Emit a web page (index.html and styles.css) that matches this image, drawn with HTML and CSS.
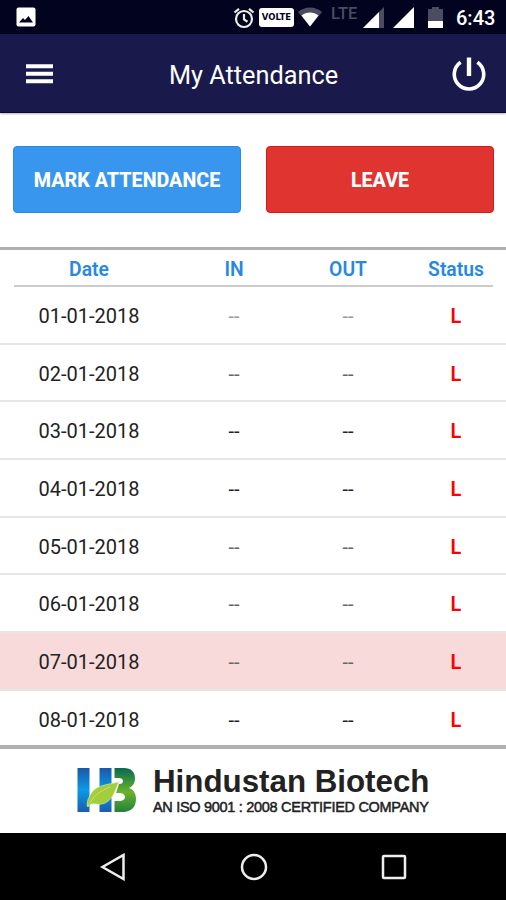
FILE: index.html
```html
<!DOCTYPE html>
<html lang="en">
<head>
    <meta charset="UTF-8">
    <meta name="viewport" content="width=device-width, initial-scale=1.0">
    <title>My Attendance</title>
    <link rel="stylesheet" href="styles.css">
</head>
<body>
    <!-- Status bar -->
    <div class="status-bar">
        <svg class="picture" width="20" height="20" viewBox="0 0 20 20">
            <rect x="0.5" y="0.5" width="19" height="19" rx="2" fill="#fff"/>
            <path d="M3 15.5L7 11l2 2 3.5-4L17 15.5z" fill="#02031f"/>
        </svg>
        <svg class="alarm" width="22" height="22" viewBox="0 0 22 22" fill="none" stroke="#eee" stroke-width="2.2">
            <circle cx="11" cy="12" r="8"/>
            <path d="M11 7v5.5l3.500 2.200M1.500 5.500L6 1.800M20.500 5.500L16 1.800"/>
        </svg>
        <span class="volte">VOLTE</span>
        <svg class="wifi" width="26" height="20" viewBox="0 0 26 20">
            <path d="M1 5C8-1 18-1 25 5L13 19.5z" fill="#4b4b62"/>
            <path d="M4.500 8.500C9 4.500 17 4.500 21.500 8.500L13 19.500z" fill="#fff"/>
        </svg>
        <span class="lte">LTE</span>
        <svg class="signal" width="21" height="21" viewBox="0 0 21 21">
            <path d="M0 21L21 0v21z" fill="#4b4b62"/>
            <path d="M0 21L16 5v16z" fill="#fff"/>
        </svg>
        <svg class="signal-full" width="21" height="21" viewBox="0 0 21 21">
            <path d="M0 21L21 0v21z" fill="#fff"/>
        </svg>
        <svg class="battery" width="15" height="22" viewBox="0 0 15 22">
            <path d="M4 0h7v2h4v12H0V2h4z" fill="#4b4b62"/>
            <path d="M0 14h15v7H0z" fill="#fff"/>
        </svg>
        <span class="time">6:43</span>
    </div>

    <!-- Header -->
    <div class="header">
        <svg class="menu" width="28" height="20" viewBox="0 0 28 20">
            <path d="M0 2.200h27M0 9.800h27M0 17.300h27" stroke="#fff" stroke-width="4"/>
        </svg>
        <h1>My Attendance</h1>
        <svg class="power" width="34" height="34" viewBox="0 0 34 34" fill="none" stroke="#fff">
            <path d="M8.600 5.200A14.700 14.700 0 1 0 25.400 5.200" stroke-width="3.600"/>
            <path d="M17 0.500v18.500" stroke-width="4.400"/>
        </svg>
    </div>

    <!-- Buttons -->
    <div class="actions">
        <button class="btn mark">MARK ATTENDANCE</button>
        <button class="btn leave">LEAVE</button>
    </div>

    <!-- Attendance list -->
    <div class="list">
        <div class="row head"><span>Date</span><span>IN</span><span>OUT</span><span>Status</span></div>
        <div class="row"><span>01-01-2018</span><span class="faint">--</span><span class="faint">--</span><span class="status">L</span></div>
        <div class="row"><span>02-01-2018</span><span class="soft">--</span><span class="soft">--</span><span class="status">L</span></div>
        <div class="row"><span>03-01-2018</span><span>--</span><span>--</span><span class="status">L</span></div>
        <div class="row"><span>04-01-2018</span><span>--</span><span>--</span><span class="status">L</span></div>
        <div class="row"><span>05-01-2018</span><span class="soft">--</span><span class="soft">--</span><span class="status">L</span></div>
        <div class="row"><span>06-01-2018</span><span class="soft">--</span><span class="soft">--</span><span class="status">L</span></div>
        <div class="row sunday"><span>07-01-2018</span><span class="soft">--</span><span class="soft">--</span><span class="status">L</span></div>
        <div class="row"><span>08-01-2018</span><span>--</span><span>--</span><span class="status">L</span></div>
    </div>

    <!-- Company footer -->
    <div class="company">
        <svg class="logo" width="60" height="46" viewBox="0 0 60 46">
            <defs>
                <linearGradient id="blue" x1="0" y1="0" x2="0" y2="1">
                    <stop offset="0" stop-color="#1c57a5"/>
                    <stop offset="0.5" stop-color="#0b9be6"/>
                    <stop offset="1" stop-color="#1a5cad"/>
                </linearGradient>
                <linearGradient id="green" x1="0" y1="0" x2="0" y2="1">
                    <stop offset="0" stop-color="#08694f"/>
                    <stop offset="0.55" stop-color="#69b32d"/>
                    <stop offset="1" stop-color="#23803c"/>
                </linearGradient>
            </defs>
            <path d="M0.500 1h12v44H0.500zM22.500 1h12v44h-12z" fill="url(#blue)"/>
            <path d="M37.500 1H47c7 0 11 4 11 10 0 5-2 8-6 10 5 2 7 6 7 11 0 8-5 13-13 13h-8.500V34H42c4 0 6-2 6-4s-2-4-5-4h-4l3-9c3 0 4-1 4-3s-2-3-4-3h-4.500z" fill="url(#green)"/>
            <path d="M10 39C10 33 12 30 14.500 26 20 18 29 18 42 15 38 22 36 35 25 37c-5 1-8-1-11 0l-3 3z" fill="#a3cd39" stroke="#dcefae" stroke-width="0.600"/>
            <path d="M11 39C16 29 23 24 33 20" fill="none" stroke="#c7e27c" stroke-width="1"/>
        </svg>
        <div class="company-text">
            <div class="company-name">Hindustan Biotech</div>
            <div class="company-tag">AN ISO 9001 : 2008 CERTIFIED COMPANY</div>
        </div>
    </div>

    <!-- Navigation bar -->
    <div class="nav-bar">
        <svg width="28" height="28" viewBox="0 0 28 28"><path d="M24.500 2v24L3.500 14z"/></svg>
        <svg width="28" height="28" viewBox="0 0 28 28"><circle cx="14" cy="14" r="12"/></svg>
        <svg width="28" height="28" viewBox="0 0 28 28"><rect x="3" y="3" width="22" height="22" rx="1"/></svg>
    </div>
</body>
</html>
```
FILE: styles.css
```css
* {
    box-sizing: border-box;
}

body {
    margin: 0;
    height: 900px;
    overflow: hidden;
    display: flex;
    flex-direction: column;
    font-family: Roboto, sans-serif;
    background: #fff;
}

svg {
    display: block;
    flex: none;
}

.status-bar {
    display: flex;
    align-items: flex-start;
    height: 34px;
    padding-top: 7px;
    background: #02031f;
    color: #fff;
}

.picture {
    margin-left: 16px;
}

.alarm {
    margin-left: 197px;
}

.volte {
    width: 35px;
    height: 19px;
    margin: 1px 0 0 4px;
    border-radius: 3px;
    background: #fff;
    color: #02031f;
    font-family: "DejaVu Sans", sans-serif;
    font-size: 8.5px;
    font-weight: 700;
    line-height: 19px;
    text-align: center;
}

.wifi {
    margin-left: 3px;
}

.lte {
    width: 27px;
    margin-left: 8px;
    color: #4b4b62;
    font-size: 16.5px;
    font-weight: 500;
    line-height: 14px;
}

.signal {
    margin: 0 0 0 5px;
}

.signal-full {
    margin-left: 9px;
}

.battery {
    margin-left: 14px;
}

.time {
    margin-left: 13px;
    font-size: 20px;
    font-weight: 500;
    line-height: 22px;
}

.header {
    display: flex;
    align-items: center;
    justify-content: space-between;
    height: 79px;
    padding: 0 20px 0 26px;
    background: #191a4b;
    border-bottom: 1px solid #090a2e;
    box-shadow: 0 1px 2px rgba(0, 0, 0, 0.3);
    color: #fff;
}

.menu {
    margin-top: 1px;
}

.header h1 {
    margin: 4px 0 0 1px;
    font-size: 25.3px;
    font-weight: 400;
}

.power {
    margin-top: 1px;
}

.actions {
    display: grid;
    grid-template-columns: 1fr 1fr;
    gap: 25px;
    height: 134px;
    padding: 33px 12px 34px 13px;
}

.btn {
    padding: 2px 0 0;
    border: 1px solid;
    border-radius: 4px;
    color: #fff;
    font-family: inherit;
    font-size: 19.7px;
    font-weight: 800;
}

.mark {
    background: #3996ee;
    border-color: #288be9;
}

.leave {
    background: #df342f;
    border-color: #d51a18;
}

.list {
    height: 502px;
    border-top: 3px solid #b0b0b0;
    border-bottom: 4px solid #b0b0b0;
    overflow: hidden;
}

.row {
    display: grid;
    grid-template-columns: 178px 112px 116px 100px;
    align-items: center;
    height: 57.7px;
    padding-top: 2px;
    border-bottom: 2px solid #e6e6e6;
    color: #222;
    font-size: 20px;
    text-align: center;
}

.head {
    height: 37px;
    margin: 0 13px 0 14px;
    padding-top: 3px;
    grid-template-columns: 150px 140px 88px 128px;
    border-bottom: 2px solid #ccc;
    color: #2589e4;
    font-size: 19.3px;
    font-weight: 600;
}

.sunday {
    background: #f9dadb;
}

.soft {
    color: #666;
}

.faint {
    color: #999;
}

.status {
    color: #f00;
    font-weight: 600;
}

.company {
    display: flex;
    height: 84px;
    padding: 18px 0 0 77px;
}

.company-text {
    margin: -3px 0 0 16px;
    color: #222;
    font-family: "Liberation Sans", Arial, sans-serif;
    white-space: nowrap;
}

.company-name {
    font-size: 31.3px;
    font-weight: 700;
    line-height: 36px;
}

.company-tag {
    font-size: 14.5px;
    letter-spacing: -0.3px;
    line-height: 15px;
    -webkit-text-stroke: 0.5px #222;
}

.nav-bar {
    display: flex;
    justify-content: space-between;
    height: 67px;
    padding: 20px 98px 0 99px;
    background: #000;
}

.nav-bar svg {
    fill: none;
    stroke: #eee;
    stroke-width: 2.5;
}
```
